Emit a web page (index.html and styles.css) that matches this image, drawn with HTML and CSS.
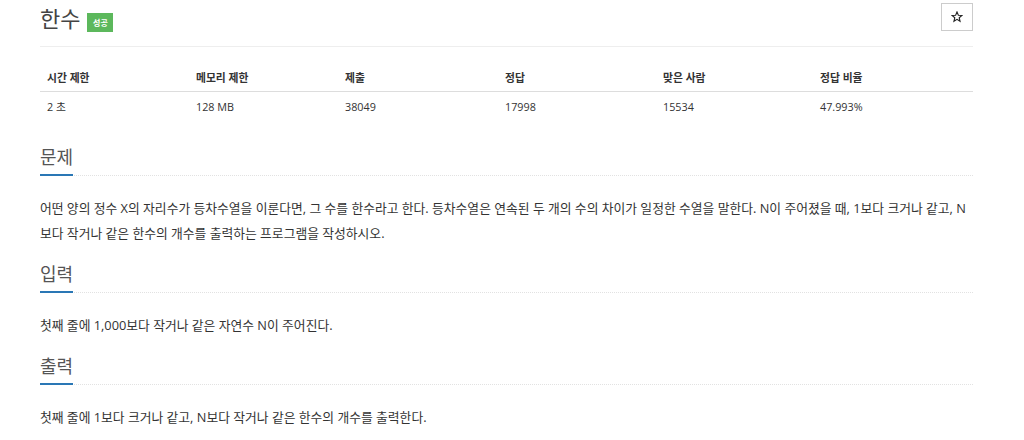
FILE: index.html
```html
<!DOCTYPE html>
<html lang="ko">
<head>
<meta charset="utf-8">
<title>한수</title>
<link rel="stylesheet" href="styles.css">
</head>
<body>
<div class="page">
  <div class="title-row">
    <div class="title-left">
      <h1 class="title">한수</h1>
      <span class="badge">성공</span>
    </div>
    <button class="star-btn" type="button" aria-label="즐겨찾기">
      <svg class="star-icon" viewBox="0 0 12 12" width="12" height="12">
        <path d="M6 0.9 L7.35 4.2 L10.9 4.45 L8.2 6.75 L9.05 10.25 L6 8.35 L2.95 10.25 L3.8 6.75 L1.1 4.45 L4.65 4.2 Z" fill="none" stroke="#222" stroke-width="1.1" stroke-linejoin="miter"/>
      </svg>
    </button>
  </div>

  <div class="info">
    <div class="info-row info-head">
      <div class="cell">시간 제한</div>
      <div class="cell">메모리 제한</div>
      <div class="cell">제출</div>
      <div class="cell">정답</div>
      <div class="cell">맞은 사람</div>
      <div class="cell">정답 비율</div>
    </div>
    <div class="info-row info-body">
      <div class="cell">2 초</div>
      <div class="cell">128 MB</div>
      <div class="cell">38049</div>
      <div class="cell">17998</div>
      <div class="cell">15534</div>
      <div class="cell">47.993%</div>
    </div>
  </div>

  <section class="section first">
    <h2 class="headline"><span>문제</span></h2>
    <p class="text">어떤 양의 정수 X의 자리수가 등차수열을 이룬다면, 그 수를 한수라고 한다. 등차수열은 연속된 두 개의 수의 차이가 일정한 수열을 말한다. N이 주어졌을 때, 1보다 크거나 같고, N보다 작거나 같은 한수의 개수를 출력하는 프로그램을 작성하시오.</p>
  </section>

  <section class="section">
    <h2 class="headline"><span>입력</span></h2>
    <p class="text">첫째 줄에 1,000보다 작거나 같은 자연수 N이 주어진다.</p>
  </section>

  <section class="section">
    <h2 class="headline"><span>출력</span></h2>
    <p class="text">첫째 줄에 1보다 크거나 같고, N보다 작거나 같은 한수의 개수를 출력한다.</p>
  </section>
</div>
</body>
</html>
```

FILE: styles.css
```css
html, body {
  margin: 0;
  padding: 0;
  background: #ffffff;
}

body {
  font-family: "Open Sans", "Noto Sans CJK KR", sans-serif;
  color: #333333;
}

.page {
  width: 933px;
  margin-left: 40px;
}

.title-row {
  display: flex;
  justify-content: space-between;
  align-items: flex-start;
  padding-top: 3px;
  height: 43px;
  box-sizing: content-box;
  border-bottom: 1px solid #eeeeee;
}

.title-left {
  display: flex;
  align-items: flex-start;
}

.title {
  margin: 0;
  font-size: 22px;
  line-height: 30px;
  font-weight: 400;
  color: #444444;
}

.badge {
  margin-top: 10px;
  margin-left: 7px;
  height: 19px;
  width: 26px;
  display: flex;
  align-items: center;
  justify-content: center;
  background: #5cb85c;
  color: #ffffff;
  font-size: 8px;
  font-weight: 700;
}

.star-btn {
  width: 32px;
  height: 28px;
  padding: 0;
  margin: 0;
  background: #ffffff;
  border: 1px solid #cccccc;
  display: flex;
  align-items: center;
  justify-content: center;
}

.star-icon {
  display: block;
}

.info {
  margin-top: 17px;
}

.info-row {
  display: grid;
  grid-template-columns: 149px 149px 160px 158px 157px 1fr;
}

.cell {
  padding: 0 7px;
  font-size: 10.8px;
  line-height: 16px;
}

.info-head {
  padding: 6px 0 5px;
  border-bottom: 1px solid #dddddd;
}

.info-head .cell {
  font-weight: 700;
}

.info-body {
  padding: 7px 0;
}

.section {
  margin-top: 16px;
}

.section.first {
  margin-top: 23px;
}

.headline {
  display: flex;
  margin: 0;
  font-size: 18px;
  font-weight: 400;
  color: #555555;
  border-bottom: 1px dotted #e2e2e2;
}

.headline span {
  display: block;
  line-height: 24px;
  padding-bottom: 5px;
  border-bottom: 2px solid #2a77b5;
  margin-bottom: -1px;
}

.text {
  margin: 20px 0 0;
  font-size: 12.8px;
  line-height: 25px;
  color: #333333;
}
```
